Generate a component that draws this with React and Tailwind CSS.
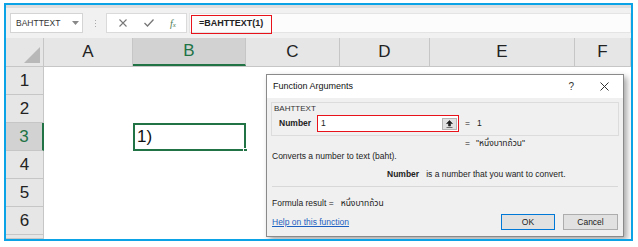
import React from 'react';

const cols = [
    { key: 'A', w: 'w-[89px]' },
    { key: 'B', w: 'w-[113px]' },
    { key: 'C', w: 'w-[94px]' },
    { key: 'D', w: 'w-[90px]' },
    { key: 'E', w: 'w-[145px]' },
    { key: 'F', w: 'w-[56px]' },
];

const rows = [1, 2, 3, 4, 5, 6, 7];

function FormulaBar() {
    return (
        <div className="h-[33px] bg-[#f1f1f1] border-t-[3px] border-[#dedede] flex items-start pt-[5px]">
            {/* Name box */}
            <div className="ml-[4px] w-[73px] h-[20px] bg-white border border-[#d4d4d4] flex items-center pl-[5px] pr-[3px]">
                <span className="text-[8.5px] text-[#333] flex-1">BAHTTEXT</span>
                <svg width="7" height="4" viewBox="0 0 7 4"><path d="M0 0 L7 0 L3.5 4 Z" fill="#888" /></svg>
            </div>
            {/* dots */}
            <div className="ml-[12px] mr-[10px] h-[20px] flex flex-col items-center justify-center gap-[2px]">
                <div className="w-[1px] h-[1px] bg-[#aaa]" />
                <div className="w-[1px] h-[1px] bg-[#aaa]" />
                <div className="w-[1px] h-[1px] bg-[#aaa]" />
            </div>
            {/* icons box */}
            <div className="w-[81px] h-[20px] bg-white border border-[#dadada] flex items-center">
                <svg className="ml-[12px]" width="8" height="8" viewBox="0 0 8 8">
                    <path d="M0.5 0.5 L7.5 7.5 M7.5 0.5 L0.5 7.5" stroke="#777" strokeWidth="1.1" />
                </svg>
                <svg className="ml-[17px]" width="10" height="8" viewBox="0 0 10 8">
                    <path d="M0.5 4 L3.5 7 L9.5 0.5" stroke="#777" strokeWidth="1.3" fill="none" />
                </svg>
                <span className="ml-[16px] text-[10px] italic text-[#4a7a52]" style={{ fontFamily: '"Liberation Serif", serif' }}>
                    f<span className="text-[7px]">x</span>
                </span>
            </div>
            {/* formula input */}
            <div className="ml-[2px] flex-1 h-[20px] bg-[#fcfcfc] border border-[#e4e4e4] flex items-center">
                <div className="ml-[1px] mt-[2px] w-[81px] h-[19px] border-[1.5px] border-[#e8131a] flex items-center pl-[7px]">
                    <span className="text-[9px] font-bold text-[#222]">=BAHTTEXT(1)</span>
                </div>
            </div>
        </div>
    );
}

function HeaderRow() {
    return (
        <div className="flex h-[29px] bg-[#e6e6e6] border-b border-[#c6c6c6]">
            <div className="w-[38px] h-full relative border-r border-[#c6c6c6] flex items-end justify-end pr-[3px] pb-[3px]">
                <svg width="16" height="16" viewBox="0 0 16 16"><path d="M16 0 L16 16 L0 16 Z" fill="#b8b8b8" /></svg>
            </div>
            {cols.map((c) =>
                c.key === 'B' ? (
                    <div key={c.key} className={`${c.w} h-full bg-[#d2d2d2] border-b-2 border-[#217346] border-r border-r-[#c6c6c6] flex items-center justify-center text-[17px] text-[#217346]`}>
                        {c.key}
                    </div>
                ) : (
                    <div key={c.key} className={`${c.w} h-full border-r border-[#c6c6c6] flex items-center justify-center text-[17px] text-[#222]`}>
                        {c.key}
                    </div>
                )
            )}
        </div>
    );
}

function GridRow({ n }) {
    const selected = n === 3;
    const partial = n === 7;
    return (
        <div className={`flex ${partial ? 'h-[4px]' : 'h-[28px]'} overflow-hidden`}>
            <div
                className={`w-[38px] h-full shrink-0 border-b border-[#c6c6c6] flex items-center justify-center text-[17px] ${
                    selected ? 'bg-[#d2d2d2] text-[#217346] border-r-2 border-r-[#217346]' : 'bg-[#e6e6e6] text-[#222] border-r border-r-[#c6c6c6]'
                }`}
            >
                {partial ? '' : n}
            </div>
            <div className="w-[89px] h-full bg-white" />
            <div className={`w-[113px] h-full bg-white relative ${selected ? 'border-2 border-[#217346]' : ''}`}>
                {selected && (
                    <>
                        <span className="absolute left-[2px] top-[2px] text-[17px] leading-[20px] text-[#111]">1)</span>
                        <div className="absolute right-[-4px] bottom-[-4px] w-[5px] h-[5px] bg-[#217346] border border-white" />
                    </>
                )}
            </div>
            <div className="flex-1 h-full bg-white" />
        </div>
    );
}

function Dialog() {
    return (
        <div className="absolute left-[260px] top-[69px] w-[358px] h-[163px] bg-[#f0f0f0] border border-[#8a8a8a] shadow-[3px_3px_6px_rgba(0,0,0,0.35)] text-[8.5px] text-[#222]">
            {/* title bar */}
            <div className="h-[23px] bg-white flex items-center pl-[6px]">
                <span className="text-[9px] text-[#111]">Function Arguments</span>
                <span className="ml-auto mr-[26px] text-[10px] text-[#333]">?</span>
                <svg className="mr-[14px]" width="9" height="9" viewBox="0 0 9 9">
                    <path d="M0.5 0.5 L8.5 8.5 M8.5 0.5 L0.5 8.5" stroke="#333" strokeWidth="1" />
                </svg>
            </div>
            {/* group box */}
            <div className="mx-[4px] mt-[4px] h-[34px] border border-[#dcdcdc] pl-[2px] pt-[1px]">
                <div className="text-[8px] leading-[9px] text-[#333]">BAHTTEXT</div>
                <div className="flex items-center mt-[2px] h-[17px]">
                    <span className="ml-[5px] w-[38px] font-bold text-[8.5px]">Number</span>
                    <div className="w-[142px] h-[17px] bg-white border-[1.5px] border-[#e8131a] flex items-center pl-[3px]">
                        <span className="flex-1">1</span>
                        <div className="w-[15px] h-[12px] mr-[1px] bg-[#e1e1e1] border border-[#b5b5b5] flex items-center justify-center">
                            <svg width="7" height="8" viewBox="0 0 7 8">
                                <path d="M3.5 0.5 L6.5 3.5 L4.5 3.5 L4.5 6 L2.5 6 L2.5 3.5 L0.5 3.5 Z M0.5 7.5 L6.5 7.5" fill="#222" stroke="#222" strokeWidth="0.6" />
                            </svg>
                        </div>
                    </div>
                    <span className="ml-[6px]">=</span>
                    <span className="ml-[7px]">1</span>
                </div>
            </div>
            <div className="h-[15px] flex items-center pl-[198px]">
                <span>=</span>
                <span className="ml-[6px]">"หนึ่งบาทถ้วน"</span>
            </div>
            <div className="h-[11px] flex items-center pl-[5px]">Converts a number to text (baht).</div>
            <div className="h-[18px] flex items-center pl-[120px] pt-[6px]">
                <span className="font-bold">Number</span>
                <span className="ml-[7px]">is a number that you want to convert.</span>
            </div>
            <div className="mx-[5px] mt-[6px] border-t border-[#d8d8d8]" />
            <div className="h-[16px] mt-[8px] flex items-center pl-[5px]">
                <span>Formula result =</span>
                <span className="ml-[7px]">หนึ่งบาทถ้วน</span>
            </div>
            <div className="flex items-center pl-[5px] mt-[3px] h-[16px]">
                <span className="text-[#1e5fbf] underline">Help on this function</span>
                <div className="ml-auto w-[54px] h-[16px] bg-[#e1e1e1] border border-[#0078d7] flex items-center justify-center">OK</div>
                <div className="ml-[8px] mr-[5px] w-[55px] h-[16px] bg-[#e1e1e1] border border-[#adadad] flex items-center justify-center">Cancel</div>
            </div>
        </div>
    );
}

export default function App() {
    return (
        <div className="w-[638px] h-[247px] bg-white pt-[3px] pl-[4px]" style={{ fontFamily: '"Liberation Sans", "Noto Sans", "Noto Sans Thai", sans-serif' }}>
            <div className="relative w-[629px] h-[238px] border-2 border-[#0ba3e6] overflow-hidden bg-white">
                <FormulaBar />
                <HeaderRow />
                {rows.map((n) => (
                    <GridRow key={n} n={n} />
                ))}
                <Dialog />
            </div>
        </div>
    );
}
